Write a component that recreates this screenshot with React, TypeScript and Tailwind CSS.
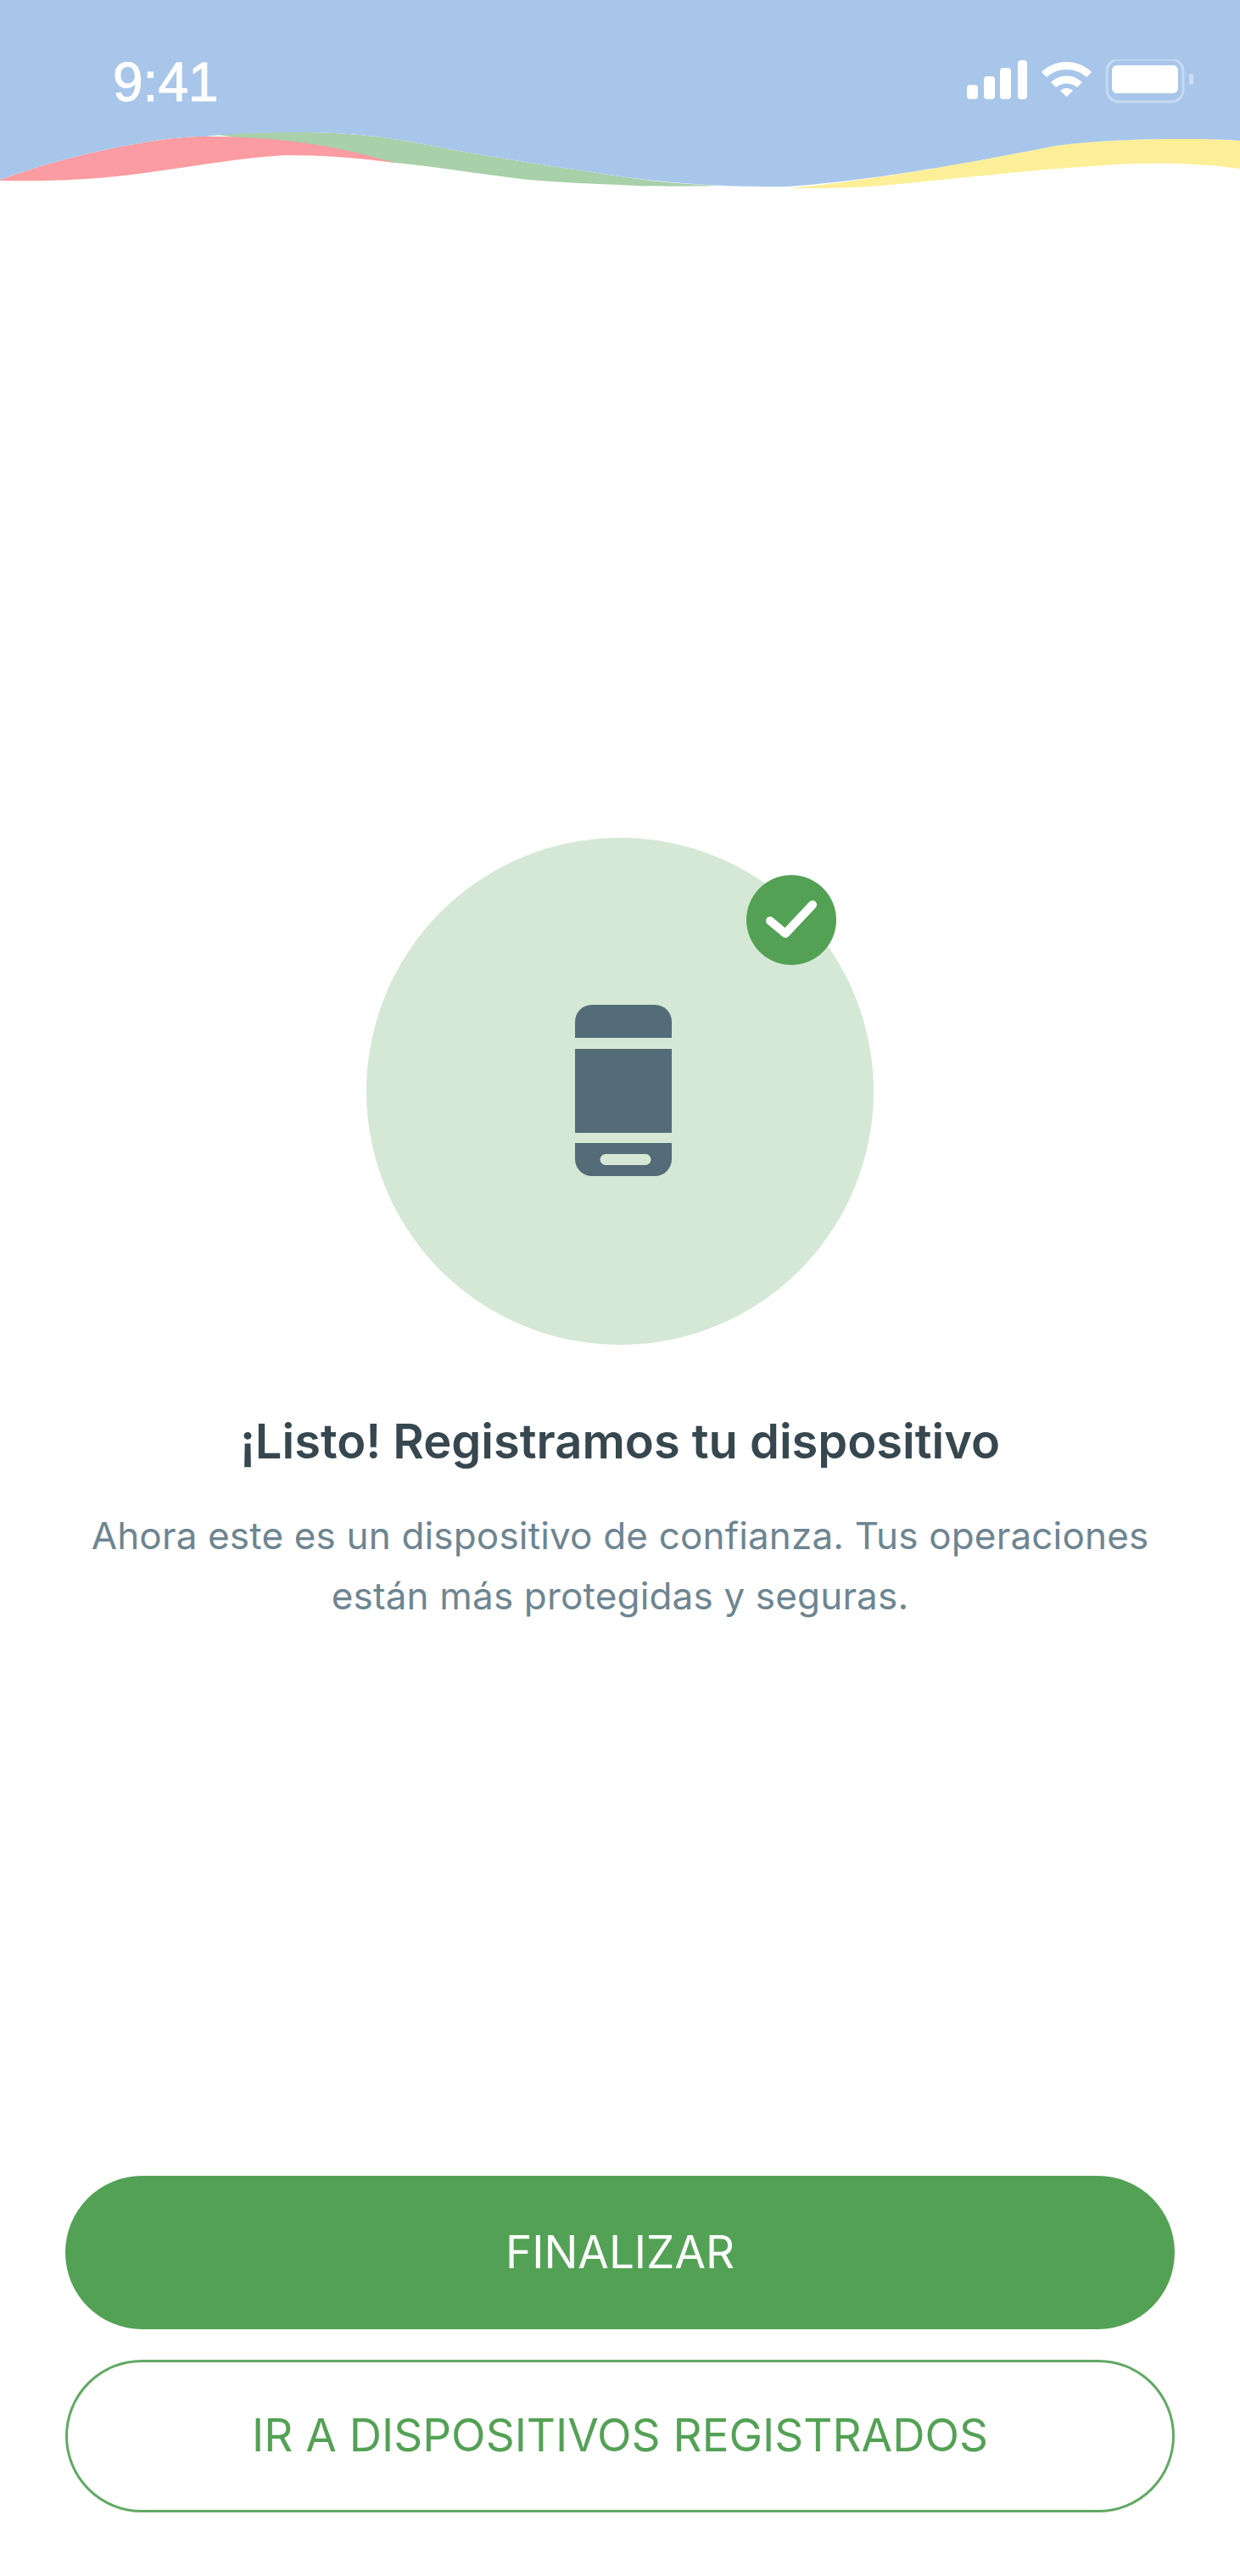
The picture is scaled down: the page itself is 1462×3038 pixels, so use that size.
const Wave = () => (
  <svg width="1462" height="225" viewBox="0 0 1462 225" className="block">
    <path d="M930 222 C 1010 214 1104 200 1244 172 C 1290 166 1340 164 1384 164 C 1410 164 1440 164 1462 166 L1462 199 C 1420 193 1380 192 1337 193 C 1250 197 1150 208 1060 217 C 1020 221 980 222 930 222 Z" fill="#fdef98" />
    <path d="M200 150 C 250 158 300 156 350 156 C 420 156 466 163 520 174 C 606 190 680 200 731 208 C 770 214 800 217 850 219 C 800 220 760 220 731 218 C 680 216 640 214 606 210 C 560 204 510 196 466 192 Z" fill="#a8d0a9" />
    <path d="M0 212 C 60 190 117 177 170 168 C 200 163 220 161 242 161 C 310 161 370 168 420 180 C 440 185 455 189 466 192 C 420 186 380 183 336 183 C 280 186 220 198 163 205 C 110 212 60 214 0 213 Z" fill="#fa9ca1" />
    <path d="M0 0 H1462 V166 C 1440 164 1410 164 1384 164 C 1340 164 1290 166 1244 172 C 1104 200 1010 214 930 220 C 880 221 800 218 731 208 C 680 200 606 190 520 174 C 466 163 420 156 350 156 C 300 156 270 158 242 161 C 220 161 200 163 170 168 C 117 177 60 190 0 212 Z" fill="#a8c6ea" />
  </svg>
);

const StatusIcons = () => (
  <svg width="270" height="56" viewBox="0 0 270 56" fill="#ffffff" className="block">
    <rect x="0" y="30" width="13" height="17" rx="4" />
    <rect x="20" y="20" width="13" height="27" rx="4" />
    <rect x="39" y="10" width="13" height="37" rx="4" />
    <rect x="60" y="1" width="11" height="46" rx="4" />
    <path d="M88 15 C 104 -1 131 -1 147 15 L 141 21 C 128 9 107 9 94 21 Z" />
    <path d="M99 27 C 110 17 125 17 136 27 L 130 33 C 123 27 112 27 105 33 Z" />
    <path d="M110 37 C 114 33 121 33 125 37 L 117.500 44 Z" />
    <rect x="165" y="0" width="90" height="50" rx="14" fill="none" stroke="#ffffff" strokeOpacity="0.35" strokeWidth="3" />
    <rect x="171" y="7" width="78" height="33" rx="6" />
    <rect x="262" y="17" width="5" height="13" rx="2.500" fillOpacity="0.4" />
  </svg>
);

const Phone = () => (
  <svg width="114" height="202" viewBox="0 0 114 202" fill="#546c78" className="block">
    <path d="M0 39 V20 A20 20 0 0 1 20 0 H94 A20 20 0 0 1 114 20 V39 Z" />
    <rect x="0" y="52" width="114" height="99" />
    <path fillRule="evenodd" d="M0 163 H114 V182 A20 20 0 0 1 94 202 H20 A20 20 0 0 1 0 182 Z M36 176 A6 6 0 0 0 36 189 H83 A6 6 0 0 0 83 176 Z" />
  </svg>
);

export default function App() {
  return (
    <div className="relative flex h-[3038px] w-[1462px] flex-col items-center bg-white font-['Inter',sans-serif]">
      <Wave />
      <div className="absolute left-0 right-0 top-[62px] flex items-start justify-between pl-[133px] pr-[52px]">
        <span className="font-['Liberation_Sans',sans-serif] text-[64px] leading-[70px] text-white [-webkit-text-stroke:1px_white]">9:41</span>
        <div className="pt-[8px]">
          <StatusIcons />
        </div>
      </div>
      <div className="relative mt-[763px] flex h-[598px] w-[598px] items-center justify-center rounded-full bg-[#d5e8d6]">
        <div className="mb-[2px] ml-[8px]">
          <Phone />
        </div>
        <div className="absolute left-[448px] top-[44px] flex h-[106px] w-[106px] items-center justify-center rounded-full bg-[#53a155]">
          <svg width="60" height="46" viewBox="0 0 60 46" fill="none" stroke="#ffffff" strokeWidth="10" strokeLinecap="round" strokeLinejoin="round">
            <path d="M5 24 L23 39 L55 5" />
          </svg>
        </div>
      </div>
      <h1 className="mt-[84px] text-[56px] font-semibold leading-[60px] text-[#37474f]">¡Listo! Registramos tu dispositivo</h1>
      <p className="mt-[46px] w-[1300px] text-center text-[44px] leading-[71px] tracking-[0.17px] text-[#6e8591]">
        Ahora este es un dispositivo de confianza. Tus operaciones
        <br />
        están más protegidas y seguras.
      </p>
      <div className="mt-auto flex w-full flex-col gap-[36px] px-[77px] pb-[75px]">
        <button className="flex h-[181px] items-center justify-center rounded-full bg-[#53a155] text-[53px] text-white">FINALIZAR</button>
        <button className="flex h-[180px] items-center justify-center rounded-full border-[3px] border-[#62a964] text-[53px] text-[#53a155]">IR A DISPOSITIVOS REGISTRADOS</button>
      </div>
    </div>
  );
}
